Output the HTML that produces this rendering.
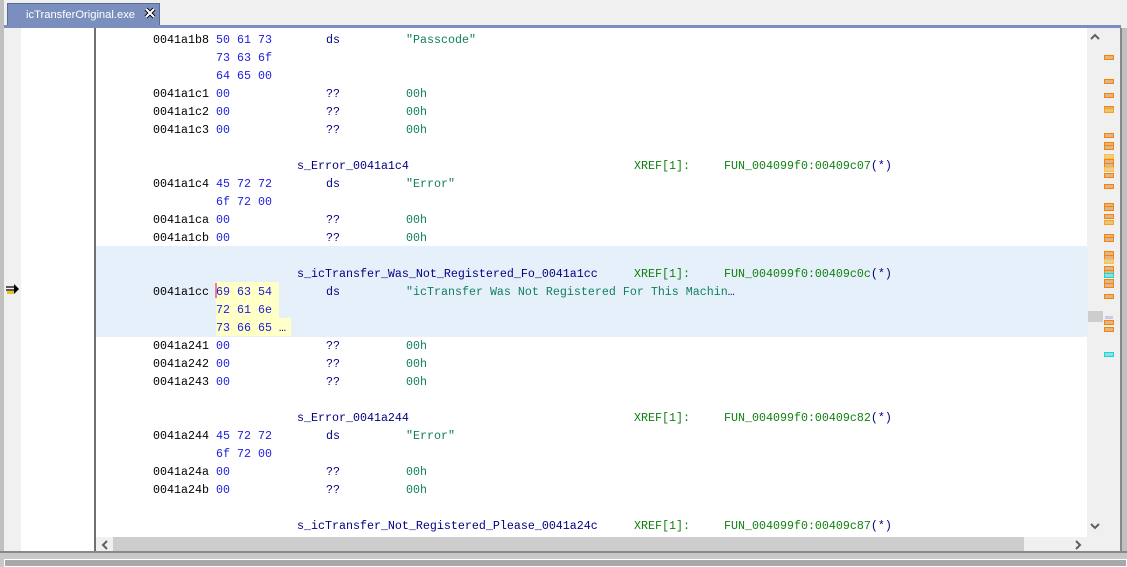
<!DOCTYPE html>
<html><head><meta charset="utf-8"><style>
*{margin:0;padding:0;box-sizing:border-box}
body{width:1127px;height:567px;overflow:hidden;background:#f0f0f0;position:relative;font-family:"Liberation Mono",monospace;font-size:11.67px}
.a{position:absolute}
.t{position:absolute;white-space:pre;line-height:18px;height:18px}
.k{color:#000}.b{color:#2020e0}.n{color:#000080}.g{color:#108010}.s{color:#108060}
.m{position:absolute;left:1104px;width:10px;height:5px;border:1px solid #ff8000;background:#d8b890}
</style></head><body>
<div class="a" style="left:0;top:0;width:4px;height:567px;background:#c0c0c0"></div>
<div class="a" style="left:7px;top:3px;width:153px;height:23px;background:#7b8fbf;border:1px solid #5a6a90;border-bottom:none;color:#fff;font-family:'Liberation Sans',sans-serif;font-size:11.2px;line-height:22px;padding-left:18px">icTransferOriginal.exe</div>
<svg class="a" style="left:144px;top:7px" width="12" height="12"><path d="M2 2l8 8M10 2l-8 8" stroke="#000" stroke-width="4"/><path d="M2 2l8 8M10 2l-8 8" stroke="#fff" stroke-width="2"/></svg>
<div class="a" style="left:4px;top:25px;width:1117px;height:3px;background:#7b8fbf"></div>
<div class="a" style="left:4px;top:28px;width:17px;height:523px;background:#f0f0f0"></div>
<div class="a" style="left:21px;top:28px;width:73px;height:523px;background:#fff"></div>
<div class="a" style="left:94px;top:28px;width:2px;height:523px;background:#707070"></div>
<div class="a" style="left:96px;top:28px;width:991px;height:509px;background:#fff"></div>
<div class="a" style="left:96px;top:246px;width:991px;height:91px;background:#e6f0fb"></div>
<div class="a" style="left:216px;top:282px;width:63px;height:36px;background:#ffffc8"></div>
<div class="a" style="left:216px;top:318px;width:75px;height:18px;background:#ffffc8"></div>
<div class="a" style="left:215px;top:283px;width:2px;height:15px;background:#f08080"></div>
<svg class="a" style="left:5px;top:282px" width="16" height="14"><path d="M1 5h9M1 8h9" stroke="#000" stroke-width="1.2"/><path d="M9 2l5 5-5 5z" fill="#000"/><path d="M2 9h7v3H2z" fill="#f0c020"/></svg>
<div style="position:absolute;left:0;top:1px">
<div class="t k" style="left:153px;top:30px">0041a1b8</div><div class="t b" style="left:216px;top:30px">50 61 73</div><div class="t n" style="left:326px;top:30px">ds</div><div class="t s" style="left:406px;top:30px">"Passcode"</div>
<div class="t b" style="left:216px;top:48px">73 63 6f</div>
<div class="t b" style="left:216px;top:66px">64 65 00</div>
<div class="t k" style="left:153px;top:84px">0041a1c1</div><div class="t b" style="left:216px;top:84px">00</div><div class="t n" style="left:326px;top:84px">??</div><div class="t s" style="left:406px;top:84px">00h</div>
<div class="t k" style="left:153px;top:102px">0041a1c2</div><div class="t b" style="left:216px;top:102px">00</div><div class="t n" style="left:326px;top:102px">??</div><div class="t s" style="left:406px;top:102px">00h</div>
<div class="t k" style="left:153px;top:120px">0041a1c3</div><div class="t b" style="left:216px;top:120px">00</div><div class="t n" style="left:326px;top:120px">??</div><div class="t s" style="left:406px;top:120px">00h</div>
<div class="t n" style="left:297px;top:156px">s_Error_0041a1c4</div><div class="t g" style="left:634px;top:156px">XREF[1]:</div><div class="t g" style="left:724px;top:156px">FUN_004099f0:00409c07<span class="n">(*)</span></div>
<div class="t k" style="left:153px;top:174px">0041a1c4</div><div class="t b" style="left:216px;top:174px">45 72 72</div><div class="t n" style="left:326px;top:174px">ds</div><div class="t s" style="left:406px;top:174px">"Error"</div>
<div class="t b" style="left:216px;top:192px">6f 72 00</div>
<div class="t k" style="left:153px;top:210px">0041a1ca</div><div class="t b" style="left:216px;top:210px">00</div><div class="t n" style="left:326px;top:210px">??</div><div class="t s" style="left:406px;top:210px">00h</div>
<div class="t k" style="left:153px;top:228px">0041a1cb</div><div class="t b" style="left:216px;top:228px">00</div><div class="t n" style="left:326px;top:228px">??</div><div class="t s" style="left:406px;top:228px">00h</div>
<div class="t n" style="left:297px;top:264px">s_icTransfer_Was_Not_Registered_Fo_0041a1cc</div><div class="t g" style="left:634px;top:264px">XREF[1]:</div><div class="t g" style="left:724px;top:264px">FUN_004099f0:00409c0c<span class="n">(*)</span></div>
<div class="t k" style="left:153px;top:282px">0041a1cc</div><div class="t b" style="left:216px;top:282px">69 63 54</div><div class="t n" style="left:326px;top:282px">ds</div><div class="t s" style="left:406px;top:282px">"icTransfer Was Not Registered For This Machin<span class="n">…</span></div>
<div class="t b" style="left:216px;top:300px">72 61 6e</div>
<div class="t b" style="left:216px;top:318px">73 66 65 <span class="n">…</span></div>
<div class="t k" style="left:153px;top:336px">0041a241</div><div class="t b" style="left:216px;top:336px">00</div><div class="t n" style="left:326px;top:336px">??</div><div class="t s" style="left:406px;top:336px">00h</div>
<div class="t k" style="left:153px;top:354px">0041a242</div><div class="t b" style="left:216px;top:354px">00</div><div class="t n" style="left:326px;top:354px">??</div><div class="t s" style="left:406px;top:354px">00h</div>
<div class="t k" style="left:153px;top:372px">0041a243</div><div class="t b" style="left:216px;top:372px">00</div><div class="t n" style="left:326px;top:372px">??</div><div class="t s" style="left:406px;top:372px">00h</div>
<div class="t n" style="left:297px;top:408px">s_Error_0041a244</div><div class="t g" style="left:634px;top:408px">XREF[1]:</div><div class="t g" style="left:724px;top:408px">FUN_004099f0:00409c82<span class="n">(*)</span></div>
<div class="t k" style="left:153px;top:426px">0041a244</div><div class="t b" style="left:216px;top:426px">45 72 72</div><div class="t n" style="left:326px;top:426px">ds</div><div class="t s" style="left:406px;top:426px">"Error"</div>
<div class="t b" style="left:216px;top:444px">6f 72 00</div>
<div class="t k" style="left:153px;top:462px">0041a24a</div><div class="t b" style="left:216px;top:462px">00</div><div class="t n" style="left:326px;top:462px">??</div><div class="t s" style="left:406px;top:462px">00h</div>
<div class="t k" style="left:153px;top:480px">0041a24b</div><div class="t b" style="left:216px;top:480px">00</div><div class="t n" style="left:326px;top:480px">??</div><div class="t s" style="left:406px;top:480px">00h</div>
<div class="t n" style="left:297px;top:516px">s_icTransfer_Not_Registered_Please_0041a24c</div><div class="t g" style="left:634px;top:516px">XREF[1]:</div><div class="t g" style="left:724px;top:516px">FUN_004099f0:00409c87<span class="n">(*)</span></div>
</div>
<div class="a" style="left:1087px;top:28px;width:33px;height:523px;background:#f0f0f0"></div>
<div class="a" style="left:1088px;top:311px;width:15px;height:11px;background:#cdcdcd"></div>
<svg class="a" style="left:1090px;top:33px" width="10" height="8"><path d="M1 6l4-4 4 4" stroke="#606060" stroke-width="2" fill="none"/></svg>
<svg class="a" style="left:1090px;top:522px" width="10" height="8"><path d="M1 2l4 4 4-4" stroke="#606060" stroke-width="2" fill="none"/></svg>
<div class="m" style="top:55px"></div><div class="m" style="top:79px"></div><div class="m" style="top:93px"></div><div class="m" style="top:106px"></div><div class="m" style="top:108px;border-color:#ffa020;background:#e0c880"></div>
<div class="m" style="top:133px"></div><div class="m" style="top:142px"></div><div class="m" style="top:145px"></div>
<div class="m" style="top:154px;border-color:#ffc040;background:#e8d090"></div><div class="m" style="top:159px"></div><div class="m" style="top:163px"></div><div class="m" style="top:167px;border-color:#ffc040;background:#e8d090"></div><div class="m" style="top:173px"></div><div class="m" style="top:184px"></div>
<div class="m" style="top:203px"></div><div class="m" style="top:206px"></div><div class="m" style="top:214px"></div><div class="m" style="top:220px;border-color:#ffa020;background:#e0c880"></div><div class="m" style="top:234px"></div><div class="m" style="top:237px"></div>
<div class="m" style="top:251px"></div><div class="m" style="top:255px"></div><div class="m" style="top:259px;border-color:#ffc040;background:#e8d090"></div><div class="m" style="top:266px"></div><div class="m" style="top:270px"></div><div class="m" style="top:273px;border-color:#00e0e0;background:#a0d8d8"></div><div class="m" style="top:279px"></div><div class="m" style="top:283px"></div>
<div class="m" style="top:294px"></div><div class="a" style="left:1105px;top:316px;width:8px;height:3px;background:#c8cce0"></div><div class="m" style="top:320px"></div><div class="m" style="top:327px"></div>
<div class="m" style="top:352px;border-color:#00e0e0;background:#a0d8d8"></div>
<div class="a" style="left:1120px;top:28px;width:7px;height:539px;background:#c0c0c0;border-left:2px solid #888"></div>
<div class="a" style="left:96px;top:537px;width:991px;height:14px;background:#f0f0f0"></div>
<div class="a" style="left:113px;top:537px;width:911px;height:14px;background:#cdcdcd"></div>
<svg class="a" style="left:101px;top:540px" width="8" height="10"><path d="M6 1L2 5l4 4" stroke="#606060" stroke-width="2" fill="none"/></svg>
<svg class="a" style="left:1074px;top:540px" width="8" height="10"><path d="M2 1l4 4-4 4" stroke="#606060" stroke-width="2" fill="none"/></svg>
<div class="a" style="left:0;top:551px;width:1127px;height:16px;background:#c8c8c8;border-top:2px solid #888"></div>
<div class="a" style="left:4px;top:559px;width:1123px;height:8px;background:#a8a8a8;border:1px solid #fff"></div>
</body></html>
